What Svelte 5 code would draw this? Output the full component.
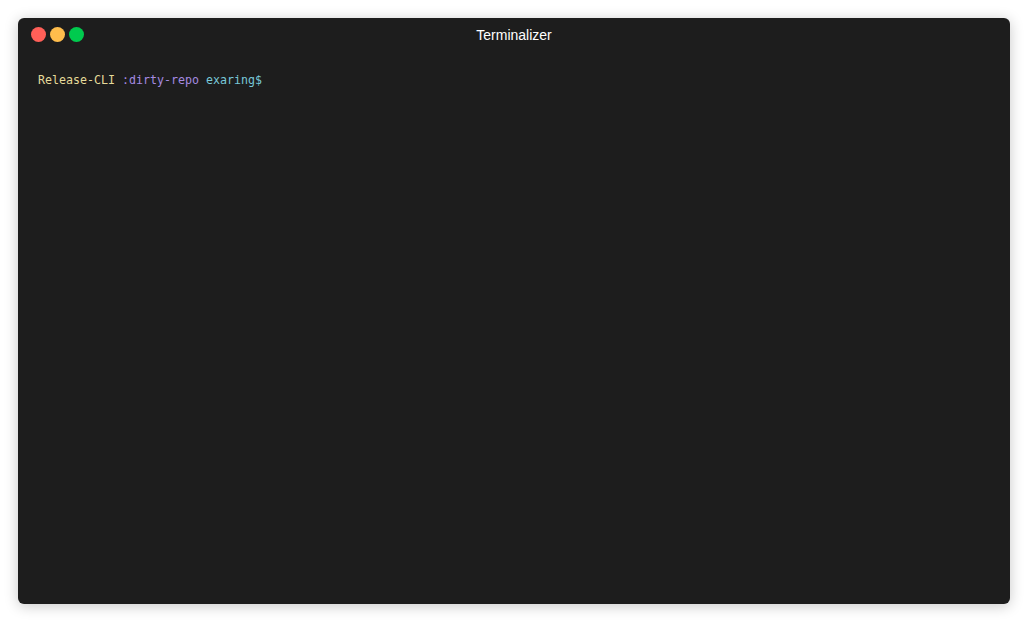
<script>
    let title = "Terminalizer";
</script>

<div class="page">
    <div class="window">
        <div class="titlebar">
            <div class="dots">
                <span class="dot red"></span>
                <span class="dot yellow"></span>
                <span class="dot green"></span>
            </div>
            <div class="title">{title}</div>
        </div>
        <div class="terminal">
            <span class="yel">Release-CLI</span> <span class="pur">:dirty-repo</span> <span class="cyan">exaring$</span>
        </div>
    </div>
</div>

<style>
    :global(body){
        background: #fff;
    }
    .page{
        height: 622px;
        padding: 18px;
        box-sizing: border-box;
        overflow: hidden;
    }
    .window{
        height: 586px;
        background: #1d1d1d;
        border-radius: 6px;
        box-shadow: 0 2px 14px rgba(0,0,0,0.22);
    }
    .titlebar{
        display: flex;
        align-items: center;
        justify-content: center;
        position: relative;
        height: 34px;
    }
    .dots{
        position: absolute;
        left: 13px;
        top: 9px;
        display: flex;
        gap: 4px;
    }
    .dot{
        width: 15px;
        height: 15px;
        border-radius: 50%;
    }
    .red{ background: #ff5f58; }
    .yellow{ background: #ffbd4c; }
    .green{ background: #00ca4e; }
    .title{
        font-family: "Liberation Sans", Arial, sans-serif;
        font-size: 14px;
        color: #fff;
    }
    .terminal{
        padding: 21px 20px 20px;
        font-family: "DejaVu Sans Mono", monospace;
        font-size: 11.63px;
        line-height: 14px;
        color: #e6e6e6;
        white-space: pre;
    }
    .yel{ color: #e6db9a; }
    .pur{ color: #a58ae0; }
    .cyan{ color: #78c8d8; }
</style>
